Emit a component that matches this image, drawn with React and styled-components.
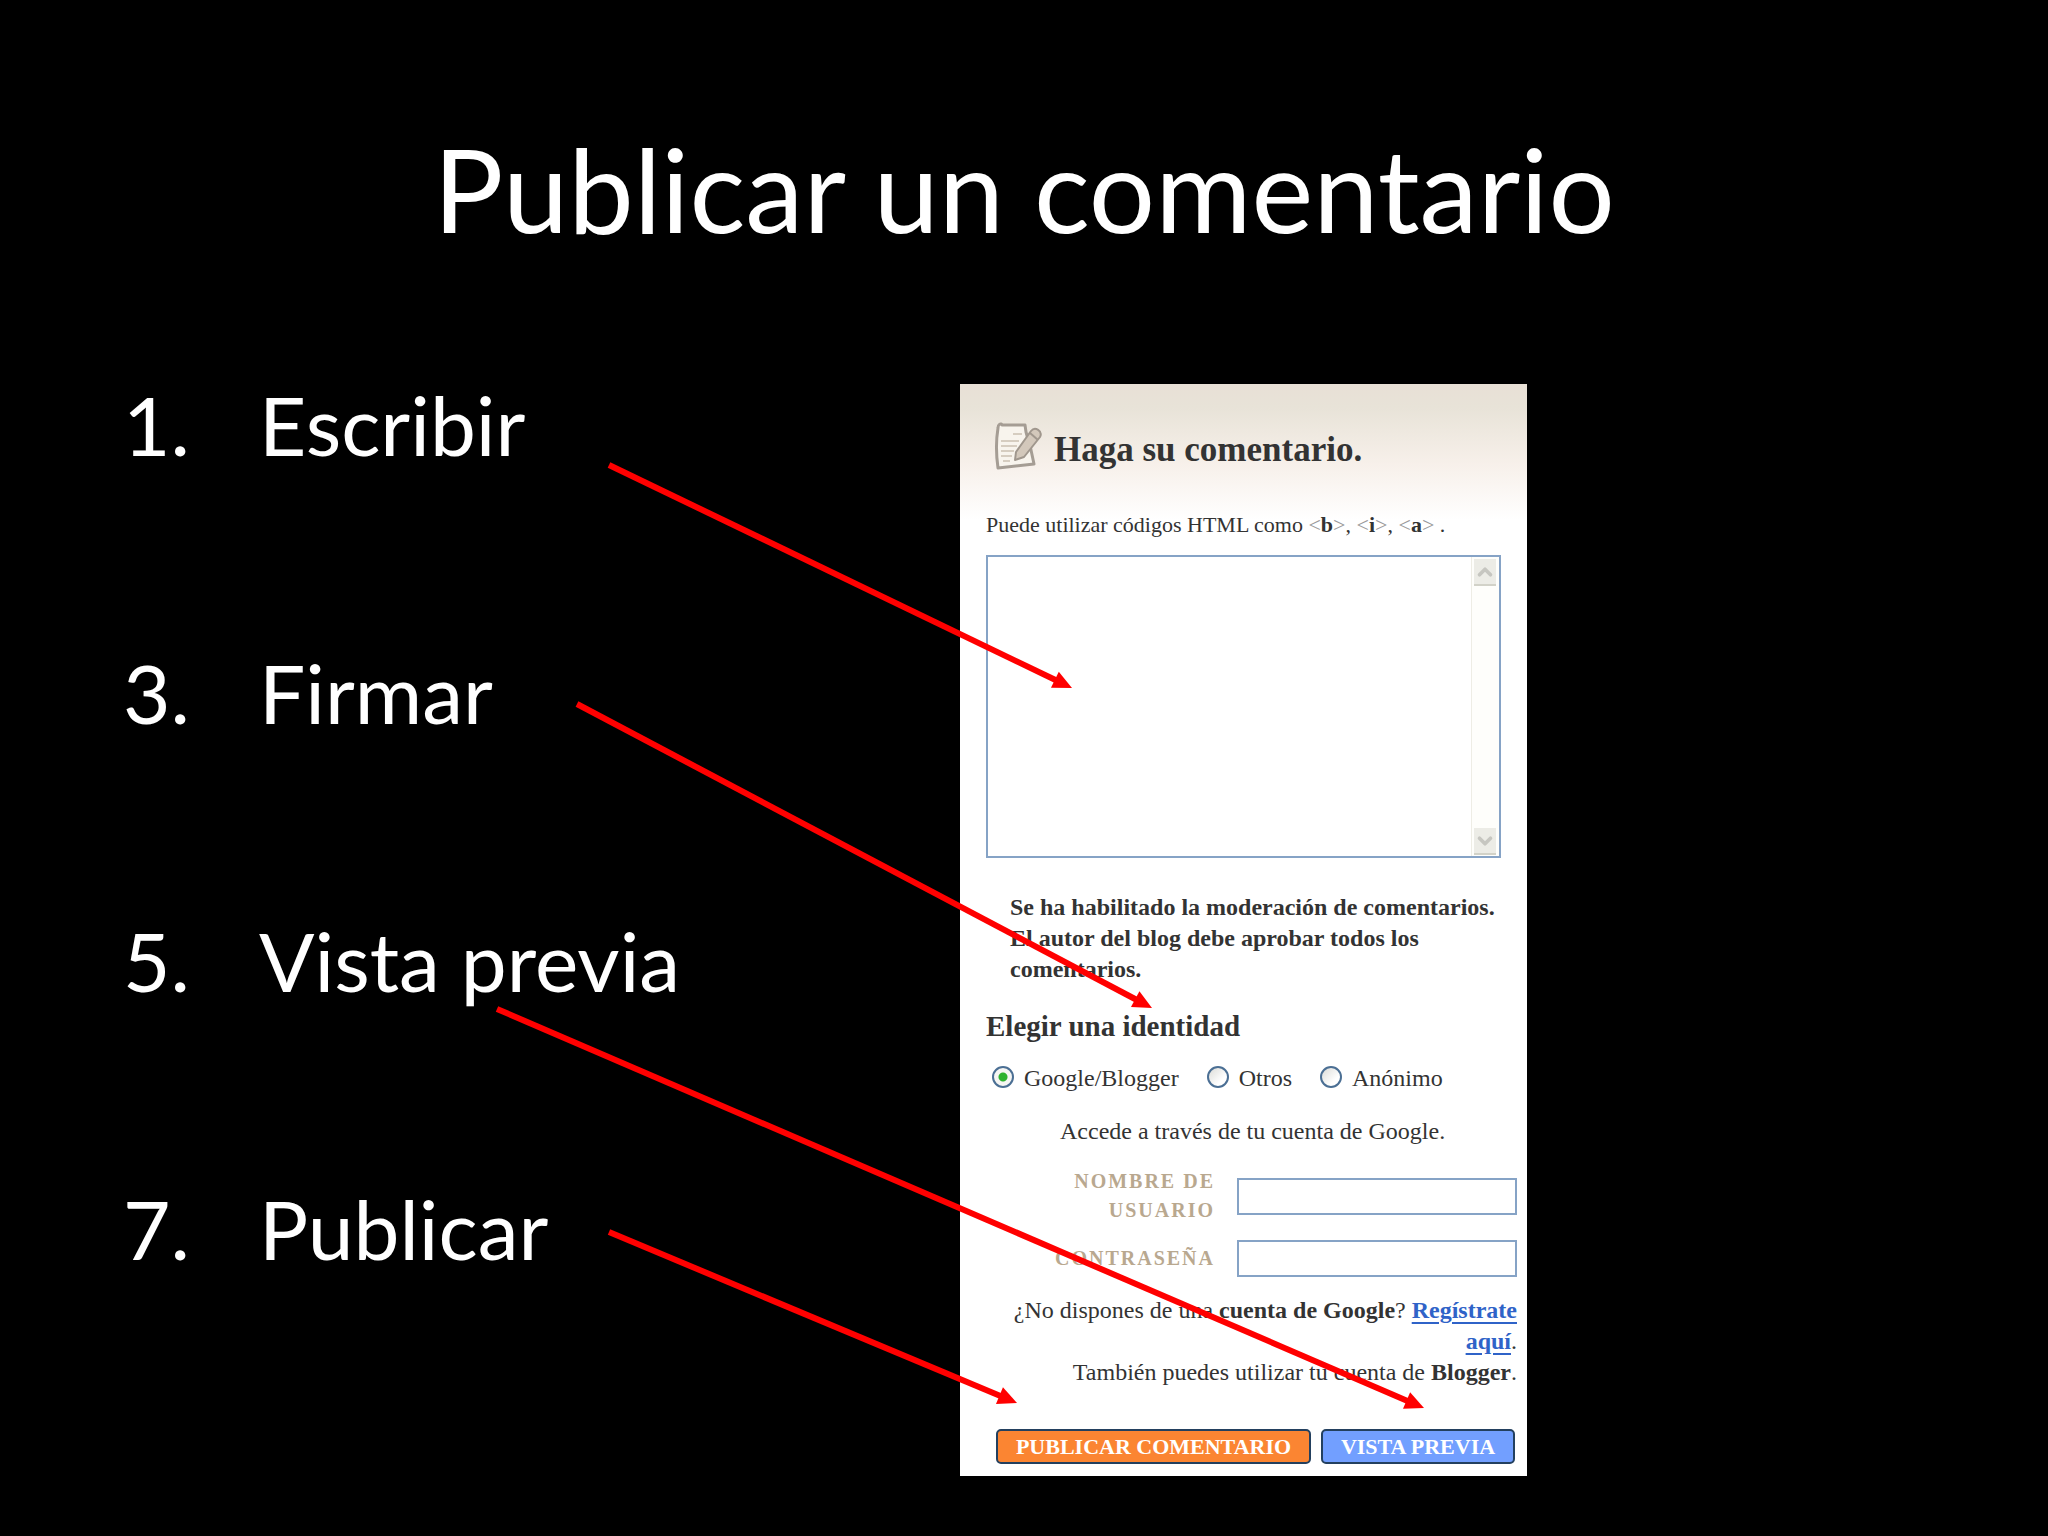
import React from 'react';
import styled, { createGlobalStyle } from 'styled-components';
import { ChevronUp, ChevronDown } from 'lucide-react';

const GlobalStyle = createGlobalStyle`
  * {
    box-sizing: border-box;
  }

  body {
    margin: 0;
    background: #000;
  }
`;

const Slide = styled.main`
  position: relative;
  min-height: 100vh;
  padding: 116px 0 59px;
  overflow: hidden;
  background: #000;
  color: #fff;
  font-family: Lato, sans-serif;
`;

const Title = styled.h1`
  margin: 0;
  font-size: 117px;
  font-weight: 400;
  line-height: 144px;
  text-align: center;
`;

const Columns = styled.div`
  display: grid;
  grid-template-columns: 960fr 567fr 521fr;
  align-items: start;
  padding-top: 124px;
`;

const Steps = styled.ol`
  display: flex;
  flex-direction: column;
  gap: 188px;
  margin: 0;
  padding: 0 0 0 123px;
  list-style: none;
`;

const Step = styled.li`
  display: grid;
  grid-template-columns: 136px 1fr;
  font-size: 82px;
  line-height: 80px;
`;

/* Comment form */
const Panel = styled.form`
  display: flex;
  flex-direction: column;
  padding: 38px 10px 12px 26px;
  background: linear-gradient(#e8e0d6 0, #e8e3d8 24px, #f7f0ea 80px, #fff 136px);
  color: #333;
  font-family: 'Liberation Serif', serif;
  font-size: 24px;
  line-height: 31px;
`;

const PanelHeader = styled.header`
  display: flex;
  align-items: flex-end;
  gap: 12px;
  padding-left: 8px;
`;

const PanelTitle = styled.h2`
  margin: 0;
  font-size: 35px;
  line-height: 40px;
`;

const Hint = styled.label`
  margin-top: 39px;
  font-size: 22px;
`;

const Bracket = styled.span`
  color: #999;
`;

const Editor = styled.div`
  display: flex;
  height: 303px;
  margin: 15px 16px 0 0;
  border: 2px solid #86a3c6;
  background: #fff;
`;

const CommentBox = styled.textarea`
  flex: 1;
  min-width: 0;
  border: 0;
  outline: 0;
  resize: none;
  overflow: hidden;
  background: transparent;
  font: inherit;
`;

const ScrollTrack = styled.div`
  display: flex;
  flex-direction: column;
  justify-content: space-between;
  width: 28px;
  padding: 2px 3px 1px 2px;
  border-left: 1px solid #eeede5;
  background: #fefefb;
`;

const ScrollButton = styled.button`
  display: flex;
  align-items: center;
  justify-content: center;
  height: 27px;
  padding: 0;
  border: 0;
  border-bottom: 2px solid #d2d2c8;
  background: #ecece6;
  color: #c6c6c0;
`;

const Notice = styled.p`
  margin: 34px 0 0 24px;
  font-weight: 700;
`;

const Identity = styled.fieldset`
  display: flex;
  gap: 28px;
  min-width: 0;
  margin: 25px 0 0;
  padding: 0 0 0 6px;
  border: 0;
`;

const Legend = styled.legend`
  margin: 0 0 21px -6px;
  padding: 0;
  font-size: 29px;
  font-weight: 700;
  line-height: 32px;
`;

const Choice = styled.label`
  display: flex;
  align-items: center;
  gap: 10px;
`;

const Radio = styled.input`
  appearance: none;
  width: 22px;
  height: 22px;
  margin: 0 0 4px;
  border: 2px solid #4b6f94;
  border-radius: 50%;
  background: linear-gradient(135deg, #dcdcd8, #fff 70%);

  &:checked {
    background: radial-gradient(circle, #2fb32f 0 4px, #f6f6f3 5px);
  }
`;

const Lead = styled.p`
  margin: 22px 0 0;
  padding-left: 74px;
`;

const Fields = styled.div`
  display: flex;
  flex-direction: column;
  gap: 15px;
  margin-top: 20px;
`;

const Field = styled.div`
  display: flex;
  align-items: center;
  justify-content: flex-end;
  gap: 22px;
`;

const FieldLabel = styled.label`
  width: 180px;
  color: #b9a88f;
  font-size: 20px;
  font-weight: 700;
  letter-spacing: 2px;
  line-height: 29px;
  text-align: right;
  text-transform: uppercase;
`;

const TextInput = styled.input`
  width: 280px;
  height: 37px;
  border: 2px solid #86a3c6;
  background: #fff;
  font: inherit;
`;

const Account = styled.div`
  margin-top: 18px;
  text-align: right;
`;

const Link = styled.a`
  color: #2f63c8;
  font-weight: 700;
  text-underline-offset: 4px;
`;

const Actions = styled.div`
  display: flex;
  justify-content: flex-end;
  gap: 10px;
  margin-top: 41px;
  padding-right: 2px;
`;

const Action = styled.button`
  width: ${({ $wide }) => ($wide ? '315px' : '194px')};
  height: 35px;
  padding: 0;
  border: 2px solid #23405f;
  border-radius: 5px;
  background: ${({ $color }) => $color};
  color: #fff;
  font: 700 22px/30px 'Liberation Serif', serif;
  white-space: nowrap;
`;

const Overlay = styled.svg`
  position: absolute;
  top: 0;
  left: 0;
  width: 100%;
  pointer-events: none;
`;

const steps = [
  { number: 1, text: 'Escribir' },
  { number: 3, text: 'Firmar' },
  { number: 5, text: 'Vista previa' },
  { number: 7, text: 'Publicar' },
];

const arrows = [
  [609, 465, 1072, 688],
  [577, 704, 1152, 1008],
  [497, 1009, 1424, 1408],
  [609, 1232, 1017, 1403],
];

const NoteIcon = () => (
  <svg width="48" height="48" viewBox="0 0 48 48" fill="none" aria-hidden="true">
    <path
      d="M4 6 C4 2 7 1 8 3 L31 3 L32 10 L37 28 L40 42 L4 46 C2 32 2 18 4 6Z"
      fill="#f8f4ed"
      stroke="#a59d94"
      strokeWidth="3"
      strokeLinejoin="round"
    />
    <path d="M19 12H28M7 19H25M7 24H23M7 29H20M7 34H18M9 39H16" stroke="#d6cdc0" strokeWidth="2" />
    <path
      d="M21 38 L22 30 L37 9 C41 4 49 9 46 15 L30 35 L21 38Z"
      fill="#d3c8bb"
      stroke="#a0978d"
      strokeWidth="2"
      strokeLinejoin="round"
    />
    <path d="M36 11L44 18" stroke="#a0978d" strokeWidth="2" />
  </svg>
);

const Arrow = ({ points: [x1, y1, x2, y2] }) => {
  const angle = (Math.atan2(y2 - y1, x2 - x1) * 180) / Math.PI;
  const length = Math.hypot(x2 - x1, y2 - y1);
  return (
    <g transform={`translate(${x1} ${y1}) rotate(${angle})`} fill="#f00">
      <rect y="-3" width={length - 16} height="6" />
      <polygon points={`${length},0 ${length - 19},-9 ${length - 19},9`} />
    </g>
  );
};

const Tag = ({ name }) => (
  <>
    <Bracket>&lt;</Bracket>
    <b>{name}</b>
    <Bracket>&gt;</Bracket>
  </>
);

const CommentForm = () => (
  <Panel onSubmit={(e) => e.preventDefault()}>
    <PanelHeader>
      <NoteIcon />
      <PanelTitle>Haga su comentario.</PanelTitle>
    </PanelHeader>

    <Hint htmlFor="comment">
      Puede utilizar códigos HTML como <Tag name="b" />, <Tag name="i" />, <Tag name="a" /> .
    </Hint>
    <Editor>
      <CommentBox id="comment" />
      <ScrollTrack>
        <ScrollButton type="button" aria-label="Subir">
          <ChevronUp size={22} strokeWidth={4} />
        </ScrollButton>
        <ScrollButton type="button" aria-label="Bajar">
          <ChevronDown size={22} strokeWidth={4} />
        </ScrollButton>
      </ScrollTrack>
    </Editor>

    <Notice>
      Se ha habilitado la moderación de comentarios.
      <br />
      El autor del blog debe aprobar todos los
      <br />
      comentarios.
    </Notice>

    <Identity>
      <Legend>Elegir una identidad</Legend>
      <Choice>
        <Radio type="radio" name="identity" defaultChecked />
        Google/Blogger
      </Choice>
      <Choice>
        <Radio type="radio" name="identity" />
        Otros
      </Choice>
      <Choice>
        <Radio type="radio" name="identity" />
        Anónimo
      </Choice>
    </Identity>

    <Lead>Accede a través de tu cuenta de Google.</Lead>

    <Fields>
      <Field>
        <FieldLabel htmlFor="user">Nombre de usuario</FieldLabel>
        <TextInput id="user" type="text" />
      </Field>
      <Field>
        <FieldLabel htmlFor="password">Contraseña</FieldLabel>
        <TextInput id="password" type="password" />
      </Field>
    </Fields>

    <Account>
      ¿No dispones de una <b>cuenta de Google</b>?{' '}
      <Link href="#registro">
        Regístrate
        <br />
        aquí
      </Link>
      .
      <br />
      También puedes utilizar tu cuenta de <b>Blogger</b>.
    </Account>

    <Actions>
      <Action type="submit" $wide $color="#fb8532">
        PUBLICAR COMENTARIO
      </Action>
      <Action type="button" $color="#729fff">
        VISTA PREVIA
      </Action>
    </Actions>
  </Panel>
);

const App = () => {
  return (
    <>
      <GlobalStyle />
      <Slide>
        <Title>Publicar un comentario</Title>
        <Columns>
          <Steps>
            {steps.map(({ number, text }) => (
              <Step key={number}>
                <span>{number}.</span>
                <span>{text}</span>
              </Step>
            ))}
          </Steps>
          <CommentForm />
        </Columns>
        <Overlay viewBox="0 0 2048 1536" aria-hidden="true">
          {arrows.map((points) => (
            <Arrow key={points.join()} points={points} />
          ))}
        </Overlay>
      </Slide>
    </>
  );
};

export default App;
